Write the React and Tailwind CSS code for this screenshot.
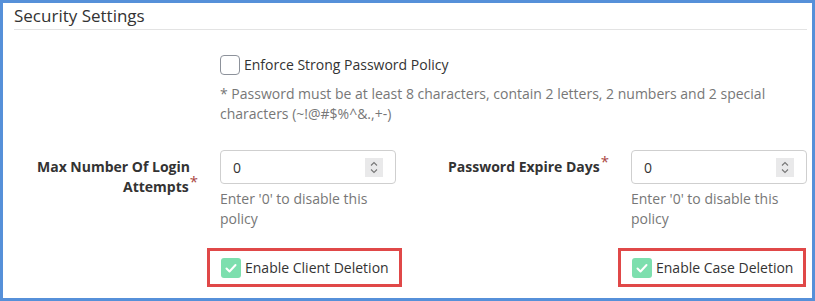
import React from 'react'

const Spinner = () => (
  <span className="flex h-[19px] w-[18px] items-center justify-center bg-[#e9e9ea]">
    <svg viewBox="0 0 18 19" className="h-[19px] w-[18px]" fill="none" stroke="#777" strokeWidth="1.1">
      <path d="M6 7.5l3-3 3 3" />
      <path d="M6 11.5l3 3 3-3" />
    </svg>
  </span>
)

const NumberField = ({ value, hint }) => (
  <div className="w-[176px]">
    <div className="flex h-[34px] items-center justify-between rounded-[4px] border border-[#cfcfcf] bg-white pl-[12px] pr-[12px]">
      <span className="text-[14px] text-[#333]">{value}</span>
      <Spinner />
    </div>
    <p className="mt-[5px] text-[14px] leading-[20px] text-[#777]">{hint}</p>
  </div>
)

const Label = ({ children }) => (
  <div className="w-[206px] pr-[30px] pt-[7px] text-right text-[14px] font-bold leading-[20px] text-[#333]">
    {children}
    <span className="relative -top-[5px] -mr-[8px] ml-[1px] text-[15px] font-normal leading-[0] text-[#a94442]">*</span>
  </div>
)

const CheckedBox = ({ label }) => (
  <div className="-ml-[13px] inline-flex h-[39px] items-center border-[3px] border-[#e04848] pl-[11px] pr-[10px]">
    <span className="flex h-[20px] w-[20px] items-center justify-center rounded-[3px] bg-[#7ddfae]">
      <svg viewBox="0 0 20 20" className="h-[20px] w-[20px]" fill="none" stroke="#fff" strokeWidth="2" strokeLinecap="round" strokeLinejoin="round">
        <path d="M5.5 10.5l3 3 6-6.5" />
      </svg>
    </span>
    <span className="ml-[4px] text-[14px] text-[#333]">{label}</span>
  </div>
)

const App = () => {
  return (
    <div className="h-[301px] w-[815px] border-[3px] border-[#5690d9] bg-white pl-[11px] pr-[5px] font-['Open_Sans',sans-serif]">
      <h2 className="border-b border-[#e3e3e3] pb-[1px] pt-[1px] text-[17px] leading-[24px] text-[#333]">
        Security Settings
      </h2>

      <div className="pl-[206px]">
        <label className="mt-[24px] flex items-center">
          <span className="h-[20px] w-[20px] rounded-[4px] border border-[#8d929b] bg-white"></span>
          <span className="ml-[4px] text-[14px] text-[#333]">Enforce Strong Password Policy</span>
        </label>
        <p className="mt-[9px] text-[14px] leading-[20px] text-[#777]">
          * Password must be at least 8 characters, contain 2 letters, 2 numbers and 2 special characters (~!@#$%^&.,+-)
        </p>
      </div>

      <div className="mt-[26px] flex">
        <div className="flex w-[411px]">
          <Label>Max Number Of Login Attempts</Label>
          <NumberField value="0" hint="Enter '0' to disable this policy" />
        </div>
        <div className="flex">
          <Label>Password Expire Days</Label>
          <NumberField value="0" hint="Enter '0' to disable this policy" />
        </div>
      </div>

      <div className="mt-[19px] flex">
        <div className="w-[411px] pl-[206px]">
          <CheckedBox label="Enable Client Deletion" />
        </div>
        <div className="pl-[206px]">
          <CheckedBox label="Enable Case Deletion" />
        </div>
      </div>
    </div>
  )
}

export default App
